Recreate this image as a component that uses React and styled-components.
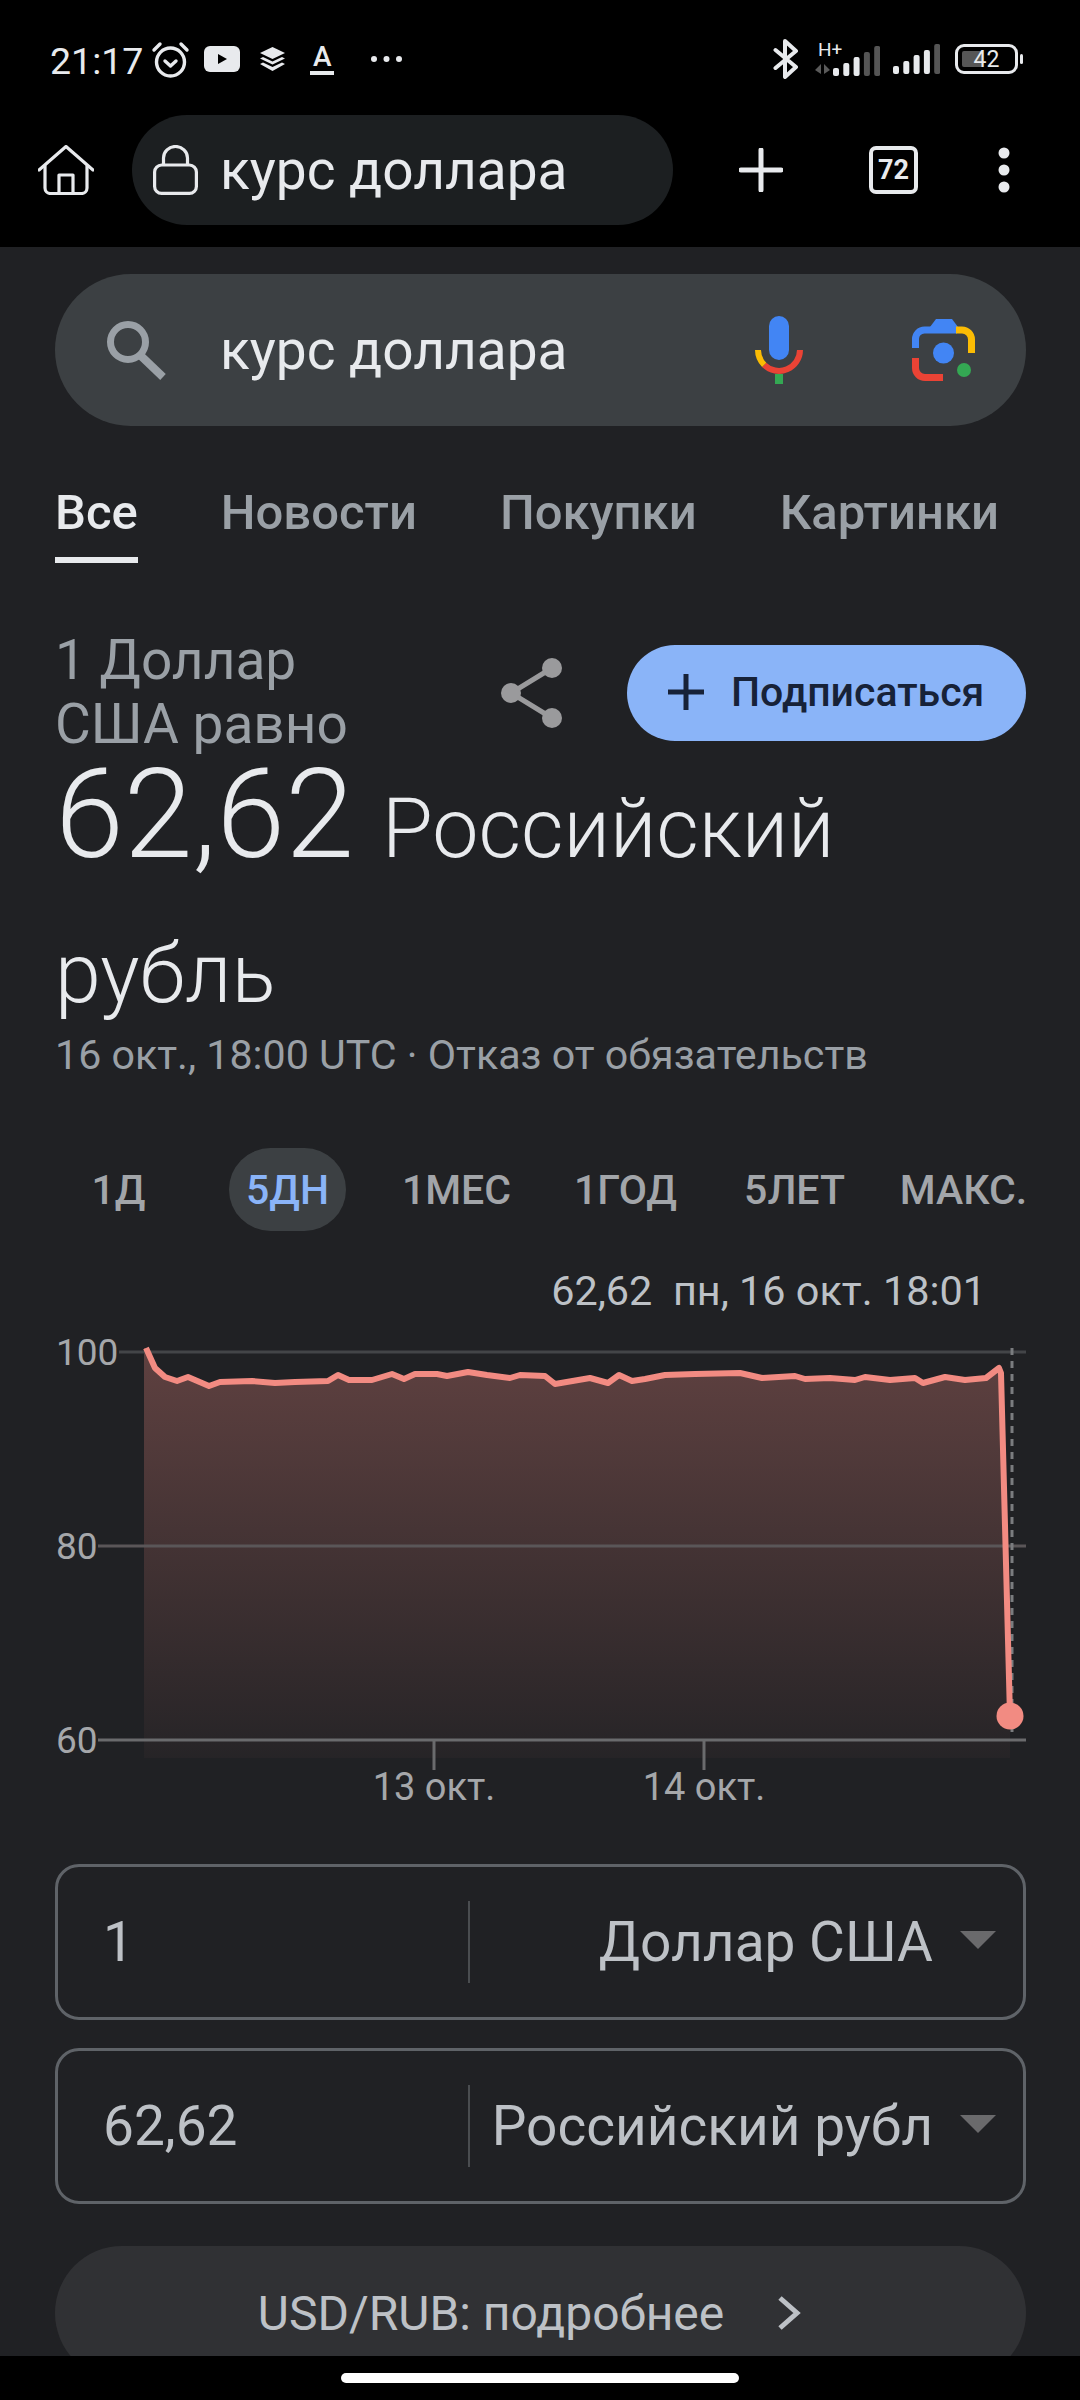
import React from "react";
import styled, { createGlobalStyle } from "styled-components";

const GlobalStyle = createGlobalStyle`
  html, body {
    margin: 0;
    background: #000;
  }
  * {
    box-sizing: border-box;
  }
`;

const Screen = styled.div`
  display: flex;
  flex-direction: column;
  width: 1080px;
  height: 2400px;
  overflow: hidden;
  background: #000;
  font-family: Roboto, "Noto Sans", sans-serif;
`;

const StatusBar = styled.div`
  display: flex;
  align-items: center;
  justify-content: space-between;
  height: 115px;
  padding: 3px 57px 0 50px;
  color: #e8eaed;
`;

const StatusGroup = styled.div`
  display: flex;
  align-items: center;
`;

const StatusSlot = styled.span`
  display: flex;
  margin-left: ${(p) => p.$left}px;
`;

const Clock = styled.span`
  font-size: 37.5px;
  line-height: 40px;
  margin-right: 8px;
  margin-top: 4px;
`;

const UnderlinedA = styled.span`
  display: block;
  width: 24px;
  height: 31px;
  font-size: 28px;
  font-weight: 500;
  line-height: 25px;
  text-align: center;
  border-bottom: 4px solid #e8eaed;
`;

const Battery = styled.div`
  width: 63px;
  height: 30px;
  padding: 4px;
  border: 3px solid #e8eaed;
  border-radius: 9px;
  background: linear-gradient(to right, #565656 42%, transparent 42%) content-box;
  font-size: 23px;
  line-height: 18px;
  text-align: center;
  margin-left: 15px;
`;

const BatteryTip = styled.div`
  width: 3px;
  height: 10px;
  margin-left: 2px;
  border-radius: 2px;
  background: #e8eaed;
`;

const Toolbar = styled.div`
  display: flex;
  align-items: center;
  height: 132px;
  padding: 0 0 22px 38px;
`;

const AddressPill = styled.div`
  display: flex;
  align-items: center;
  gap: 22px;
  width: 541px;
  height: 110px;
  margin: 0 66px 0 38px;
  padding-left: 21px;
  border-radius: 55px;
  background: #1c1f21;
  color: #e8eaed;
  font-size: 55px;
`;

const TabCounter = styled.div`
  display: flex;
  align-items: center;
  justify-content: center;
  width: 49px;
  height: 48px;
  margin: 0 80px 0 86px;
  border: 4px solid #e8eaed;
  border-radius: 7px;
  color: #e8eaed;
  font-size: 27px;
  font-weight: 700;
`;

const Page = styled.main`
  flex: 1;
  min-height: 0;
  overflow: hidden;
  padding: 27px 54px 0 55px;
  background: #202124;
`;

const SearchBox = styled.div`
  display: flex;
  align-items: center;
  height: 152px;
  padding: 0 51px;
  border-radius: 76px;
  background: #3c4043;
  color: #e8eaed;
  font-size: 55px;
`;

const SearchText = styled.span`
  flex: 1;
  margin-left: 54px;
`;

const MicSlot = styled.span`
  display: flex;
  margin-right: 109px;
`;

const TabsRow = styled.nav`
  display: flex;
  justify-content: space-between;
  width: 944px;
  height: 137px;
  padding-top: 61px;
`;

const Tab = styled.span`
  height: 76px;
  font-size: 49px;
  font-weight: 500;
  line-height: 52px;
  color: ${(p) => (p.$active ? "#e8eaed" : "#9aa0a6")};
  border-bottom: 6px solid ${(p) => (p.$active ? "#e8eaed" : "transparent")};
`;

const HeadRow = styled.div`
  display: flex;
  align-items: flex-start;
  height: 170px;
  margin-top: 65px;
`;

const Question = styled.div`
  width: 310px;
  font-size: 55px;
  line-height: 64px;
  color: #9aa0a6;
`;

const Actions = styled.div`
  display: flex;
  align-items: center;
  margin-left: auto;
  margin-top: 17px;
`;

const FollowButton = styled.div`
  display: flex;
  align-items: center;
  gap: 27px;
  width: 399px;
  height: 96px;
  margin-left: 64px;
  padding-left: 41px;
  padding-bottom: 2px;
  border-radius: 48px;
  background: #8ab4f8;
  color: #172238;
  font-size: 41px;
  font-weight: 500;
`;

const Answer = styled.div`
  width: 900px;
  margin-top: -56px;
  font-size: 82.5px;
  font-weight: 300;
  line-height: 145px;
  color: #e8eaed;
`;

const AnswerValue = styled.span`
  font-size: 124px;
  margin-right: 28px;
`;

const Updated = styled.div`
  margin-top: -13px;
  font-size: 41.2px;
  line-height: 44px;
  color: #9aa0a6;
`;

const RangeRow = styled.div`
  display: grid;
  grid-template-columns: repeat(6, 169px);
  justify-items: center;
  align-items: center;
  height: 83px;
  margin: 71px 0 0 -21px;
`;

const RangeItem = styled.span`
  display: flex;
  align-items: center;
  justify-content: center;
  width: 117px;
  height: 83px;
  border-radius: 42px;
  background: ${(p) => (p.$active ? "#3c4043" : "transparent")};
  color: ${(p) => (p.$active ? "#8ab4f8" : "#a2a5a9")};
  font-size: 41px;
  font-weight: 500;
  white-space: nowrap;
`;

const Legend = styled.div`
  height: 46px;
  margin: 37px 0 17px;
  padding-right: 40px;
  text-align: right;
  white-space: pre;
  font-size: 41.4px;
  line-height: 46px;
  color: #bdc1c6;
`;

const ChartSvg = styled.svg`
  display: block;
  width: 971px;
  height: 500px;
  font-family: Roboto, sans-serif;
`;

const ConverterBox = styled.div`
  display: flex;
  align-items: center;
  height: 156px;
  margin-top: ${(p) => p.$top}px;
  border: 3px solid #5f6368;
  border-radius: 24px;
  font-size: 55px;
  color: #bdc1c6;
`;

const Amount = styled.div`
  width: 410px;
  padding-left: 45px;
`;

const CurrencyCell = styled.div`
  flex: 1;
  display: flex;
  align-items: center;
  justify-content: flex-end;
  height: 82px;
  padding-right: 27px;
  border-left: 2px solid #4a4d50;
`;

const CurrencyName = styled.span`
  white-space: nowrap;
`;

const Caret = styled.span`
  width: 0;
  height: 0;
  margin-left: 27px;
  margin-top: -4px;
  border-left: 18px solid transparent;
  border-right: 18px solid transparent;
  border-top: 18px solid #6a6a6c;
`;

const DetailsButton = styled.div`
  display: flex;
  align-items: center;
  justify-content: center;
  gap: 53px;
  height: 134px;
  margin-top: 42px;
  padding-right: 22px;
  border-radius: 67px;
  background: #303134;
  color: #bdc1c6;
  font-size: 48px;
`;

const NavBar = styled.div`
  display: flex;
  justify-content: center;
  height: 44px;
  padding-top: 17px;
  background: #000;
`;

const HomePill = styled.div`
  width: 398px;
  height: 10px;
  border-radius: 5px;
  background: #fff;
`;

const line = [
  [146, 1347], [155, 1367], [165, 1376], [177, 1380], [188, 1376], [209, 1385], [220, 1381],
  [252, 1380], [275, 1382], [295, 1381], [328, 1380], [338, 1374], [349, 1379], [372, 1379],
  [392, 1373], [404, 1378], [415, 1373], [437, 1373], [447, 1375], [468, 1371], [487, 1374],
  [510, 1377], [520, 1374], [545, 1375], [555, 1383], [590, 1377], [608, 1382], [619, 1374],
  [632, 1380], [645, 1378], [665, 1374], [695, 1373], [740, 1372], [762, 1377], [795, 1375],
  [805, 1378], [830, 1377], [855, 1379], [865, 1376], [890, 1379], [915, 1377], [923, 1382],
  [945, 1376], [965, 1379], [986, 1377], [999, 1367], [1001, 1372], [1010, 1715],
];
const linePoints = line.map((p) => p.join(",")).join(" ");

const axis = [
  { label: "100", y: 1351, from: 119, color: "#434548" },
  { label: "80", y: 1545, from: 98, color: "#5a5658" },
  { label: "60", y: 1739, from: 98, color: "#6a6b6d" },
];

const ticks = [
  { x: 434, label: "13 окт." },
  { x: 704, label: "14 окт." },
];

const bars = [8, 13, 19, 24, 30];

const SignalBars = ({ lit }) =>
  bars.map((h, i) => (
    <rect key={i} x={i * 10.3} y={30 - h} width="6" height={h} rx="2" fill={i < lit ? "#e8eaed" : "#555"} />
  ));

const HomeIcon = () => (
  <svg width="56" height="50" viewBox="0 0 56 50" fill="none" stroke="#e8eaed" strokeWidth="3.2" strokeLinejoin="round" strokeLinecap="round">
    <path d="M1 25 28 1.5 55 25" />
    <path d="M7 21v22a5.5 5.5 0 0 0 5.5 5.5h31a5.5 5.5 0 0 0 5.5-5.5V21" />
    <path d="M21 48.5V30h14v18.5" />
  </svg>
);

const LockIcon = () => (
  <svg width="45" height="50" viewBox="0 0 45 50" fill="none" stroke="#e8eaed" strokeWidth="3.2">
    <rect x="1.6" y="20" width="41.8" height="28.4" rx="7" />
    <path d="M10.5 20v-7a12 11.5 0 0 1 24 0v7" />
  </svg>
);

const PlusIcon = () => (
  <svg width="44" height="44" viewBox="0 0 44 44" stroke="#e8eaed" strokeWidth="5" strokeLinecap="round">
    <path d="M22 2v40M2 22h40" />
  </svg>
);

const MenuDots = () => (
  <svg width="12" height="46" viewBox="0 0 12 46" fill="#e8eaed">
    <circle cx="6" cy="6" r="5.5" />
    <circle cx="6" cy="23" r="5.5" />
    <circle cx="6" cy="40" r="5.5" />
  </svg>
);

const SearchIcon = () => (
  <svg width="60" height="60" viewBox="0 0 60 60" fill="none" stroke="#9aa0a6" strokeWidth="7">
    <circle cx="22" cy="22" r="17.5" />
    <path d="M34 35 57 57" strokeWidth="8" />
  </svg>
);

const MicIcon = () => (
  <svg width="48" height="68" viewBox="0 0 48 68" fill="none" strokeWidth="6">
    <rect x="14" y="0" width="20" height="44" rx="10" fill="#4285f4" />
    <path d="M45 34A21 21 0 0 1 9.2 48.8" stroke="#ea4335" />
    <path d="M3 34A21 21 0 0 0 9.2 48.8" stroke="#fbbc04" />
    <rect x="20" y="58" width="8" height="10" fill="#34a853" />
  </svg>
);

const LensIcon = () => (
  <svg width="63" height="62" viewBox="0 0 63 62" fill="none" strokeWidth="7">
    <path d="M3.5 29v-9a9 9 0 0 1 9-9H45" stroke="#4285f4" />
    <path d="M18 8 24 0h16l6 8z" fill="#4285f4" />
    <path d="M44 11h6a9.5 9.5 0 0 1 9.5 9.5V34" stroke="#fbbc04" />
    <path d="M3.5 39v10a9.5 9.5 0 0 0 9.5 9.5h18" stroke="#ea4335" />
    <circle cx="31.5" cy="34" r="10.5" fill="#4285f4" />
    <circle cx="52" cy="51" r="7" fill="#34a853" />
  </svg>
);

const ShareIcon = () => (
  <svg width="62" height="72" viewBox="0 0 62 72" fill="#9a9a9c">
    <path d="M51 11 10 36l41 25" fill="none" stroke="#9a9a9c" strokeWidth="5" />
    <circle cx="51" cy="11" r="10" />
    <circle cx="10" cy="36" r="10" />
    <circle cx="51" cy="61" r="10" />
  </svg>
);

const App = () => (
  <Screen>
    <GlobalStyle />
    <StatusBar>
      <StatusGroup>
        <Clock>21:17</Clock>
        <svg width="39" height="38" viewBox="0 0 39 38" fill="none" stroke="#e8eaed" strokeWidth="3.4" strokeLinecap="round" strokeLinejoin="round">
          <circle cx="19.5" cy="22" r="14" />
          <path d="M14 21l5.5 5 5.5-5M3 10l6-6M36 10l-6-6" />
        </svg>
        <StatusSlot $left={14}>
          <svg width="36" height="26" viewBox="0 0 36 26">
            <rect width="36" height="26" rx="6" fill="#e8eaed" />
            <path d="M14 8v10l9-5z" fill="#000" />
          </svg>
        </StatusSlot>
        <StatusSlot $left={20}>
          <svg width="25" height="24" viewBox="0 0 25 24" fill="#e8eaed">
            <path d="M12.5 0 25 6l-12.5 6L0 6z" />
            <path d="M3 10l9.5 4.5L22 10l3 1.5-12.5 6L0 11.5z" />
            <path d="M3 15.5 12.5 20l9.5-4.5 3 1.5-12.5 7L0 17z" />
          </svg>
        </StatusSlot>
        <StatusSlot $left={25}>
          <UnderlinedA>A</UnderlinedA>
        </StatusSlot>
        <StatusSlot $left={36}>
          <svg width="33" height="8" viewBox="0 0 33 8" fill="#e8eaed">
            <circle cx="4" cy="4" r="3" />
            <circle cx="16.5" cy="4" r="3" />
            <circle cx="29" cy="4" r="3" />
          </svg>
        </StatusSlot>
      </StatusGroup>
      <StatusGroup>
        <svg width="26" height="40" viewBox="0 0 26 40" fill="none" stroke="#e8eaed" strokeWidth="4" strokeLinejoin="round" strokeLinecap="round">
          <path d="M2.5 11 23 28l-11 10V2l11 10L2.5 29" />
        </svg>
        <StatusSlot $left={15}>
          <svg width="66" height="42" viewBox="0 -4 66 42" fill="#e8eaed">
            <text x="4" y="14" fontSize="19" fontFamily="Roboto, sans-serif">H+</text>
            <path d="M7 22v10l-6-4zM10 22v10l6-4z" fill="#5a5a5a" />
            <g transform="translate(19 4)">
              <SignalBars lit={3} />
            </g>
          </svg>
        </StatusSlot>
        <StatusSlot $left={13}>
          <svg width="47" height="30" viewBox="0 0 47 30">
            <SignalBars lit={4} />
          </svg>
        </StatusSlot>
        <Battery>42</Battery>
        <BatteryTip />
      </StatusGroup>
    </StatusBar>

    <Toolbar>
      <HomeIcon />
      <AddressPill>
        <LockIcon />
        курс доллара
      </AddressPill>
      <PlusIcon />
      <TabCounter>72</TabCounter>
      <MenuDots />
    </Toolbar>

    <Page>
      <SearchBox>
        <SearchIcon />
        <SearchText>курс доллара</SearchText>
        <MicSlot>
          <MicIcon />
        </MicSlot>
        <LensIcon />
      </SearchBox>

      <TabsRow>
        <Tab $active>Все</Tab>
        <Tab>Новости</Tab>
        <Tab>Покупки</Tab>
        <Tab>Картинки</Tab>
      </TabsRow>

      <HeadRow>
        <Question>1 Доллар США равно</Question>
        <Actions>
          <ShareIcon />
          <FollowButton>
            <svg width="36" height="36" viewBox="0 0 36 36" stroke="#172238" strokeWidth="5">
              <path d="M18 0v36M0 18h36" />
            </svg>
            Подписаться
          </FollowButton>
        </Actions>
      </HeadRow>

      <Answer>
        <AnswerValue>62,62</AnswerValue>
        Российский рубль
      </Answer>
      <Updated>16 окт., 18:00 UTC · Отказ от обязательств</Updated>

      <RangeRow>
        <RangeItem>1Д</RangeItem>
        <RangeItem $active>5ДН</RangeItem>
        <RangeItem>1МЕС</RangeItem>
        <RangeItem>1ГОД</RangeItem>
        <RangeItem>5ЛЕТ</RangeItem>
        <RangeItem>МАКС.</RangeItem>
      </RangeRow>

      <Legend>62,62  пн, 16 окт. 18:01</Legend>

      <ChartSvg viewBox="55 1330 971 500">
        <defs>
          <linearGradient id="area" x1="0" y1="0" x2="0" y2="1">
            <stop offset="0" stopColor="#f28b82" stopOpacity="0.3" />
            <stop offset="1" stopColor="#f28b82" stopOpacity="0.03" />
          </linearGradient>
        </defs>
        <polygon points={`${linePoints} 1010,1757 144,1757 144,1347`} fill="url(#area)" />
        {axis.map((a) => (
          <g key={a.label}>
            <line x1={a.from} x2="1026" y1={a.y} y2={a.y} stroke={a.color} strokeWidth="3" />
            <text x="56" y={a.y + 13} fontSize="37" fill="#a5a7aa">{a.label}</text>
          </g>
        ))}
        <line x1="1012" x2="1012" y1="1347" y2="1736" stroke="#7a7c7f" strokeWidth="3" strokeDasharray="7 6" />
        <polyline points={linePoints} fill="none" stroke="#f28b82" strokeWidth="6" strokeLinejoin="round" />
        <circle cx="1010" cy="1715" r="13.5" fill="#f28b82" />
        {ticks.map((t) => (
          <g key={t.label}>
            <line x1={t.x} x2={t.x} y1="1740" y2="1769" stroke="#6a6b6d" strokeWidth="3" />
            <text x={t.x} y="1799" fontSize="38" fill="#a5a7aa" textAnchor="middle">{t.label}</text>
          </g>
        ))}
      </ChartSvg>

      <ConverterBox $top={33}>
        <Amount>1</Amount>
        <CurrencyCell>
          <CurrencyName>Доллар США</CurrencyName>
          <Caret />
        </CurrencyCell>
      </ConverterBox>
      <ConverterBox $top={28}>
        <Amount>62,62</Amount>
        <CurrencyCell>
          <CurrencyName>Российский рубл</CurrencyName>
          <Caret />
        </CurrencyCell>
      </ConverterBox>

      <DetailsButton>
        USD/RUB: подробнее
        <svg width="24" height="34" viewBox="0 0 24 34" fill="none" stroke="#bdc1c6" strokeWidth="5">
          <path d="M3 2l17 15L3 32" />
        </svg>
      </DetailsButton>
    </Page>

    <NavBar>
      <HomePill />
    </NavBar>
  </Screen>
);

export default App;
